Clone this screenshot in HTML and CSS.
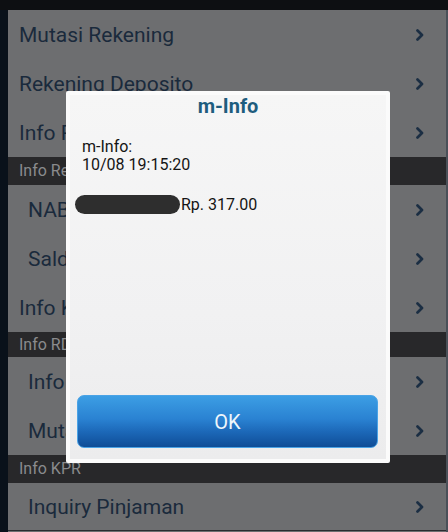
FILE: index.html
```html
<!DOCTYPE html>
<html lang="id">
<head>
<meta charset="utf-8">
<title>m-Info</title>
<link rel="stylesheet" href="styles.css">
</head>
<body>
<div class="top"></div>
<div class="main">
  <div class="rail"></div>
  <div class="list">
    <div class="row"><span>Mutasi Rekening</span><svg class="chev" viewBox="0 0 8 12"><polyline points="1.5,1.5 6,6 1.5,10.5"/></svg></div>
    <div class="row"><span>Rekening Deposito</span><svg class="chev" viewBox="0 0 8 12"><polyline points="1.5,1.5 6,6 1.5,10.5"/></svg></div>
    <div class="row"><span>Info Rekening</span><svg class="chev" viewBox="0 0 8 12"><polyline points="1.5,1.5 6,6 1.5,10.5"/></svg></div>
    <div class="section">Info Reksa Dana</div>
    <div class="row sub"><span>NAB Reksa Dana</span><svg class="chev" viewBox="0 0 8 12"><polyline points="1.5,1.5 6,6 1.5,10.5"/></svg></div>
    <div class="row sub"><span>Saldo Reksa Dana</span><svg class="chev" viewBox="0 0 8 12"><polyline points="1.5,1.5 6,6 1.5,10.5"/></svg></div>
    <div class="row"><span>Info Kurs</span><svg class="chev" viewBox="0 0 8 12"><polyline points="1.5,1.5 6,6 1.5,10.5"/></svg></div>
    <div class="section short">Info RDN</div>
    <div class="row sub"><span>Info Saldo</span><svg class="chev" viewBox="0 0 8 12"><polyline points="1.5,1.5 6,6 1.5,10.5"/></svg></div>
    <div class="row sub"><span>Mutasi RDN</span><svg class="chev" viewBox="0 0 8 12"><polyline points="1.5,1.5 6,6 1.5,10.5"/></svg></div>
    <div class="section">Info KPR</div>
    <div class="row sub last"><span>Inquiry Pinjaman</span><svg class="chev" viewBox="0 0 8 12"><polyline points="1.5,1.5 6,6 1.5,10.5"/></svg></div>
  </div>
</div>

<div class="dialog">
  <div class="dialog-inner">
    <div class="dialog-title">m-Info</div>
    <div class="dialog-body">
      <div class="line">m-Info:</div>
      <div class="line">10/08 19:15:20</div>
      <div class="line amount"><span class="redact"></span>Rp. 317.00</div>
    </div>
    <button class="ok">OK</button>
  </div>
</div>
</body>
</html>
```
FILE: styles.css
```css
* { box-sizing: border-box; }
html, body { margin: 0; padding: 0; }
body {
  width: 448px;
  height: 532px;
  overflow: hidden;
  background: #0d0f12;
  font-family: Roboto, "Noto Sans", "Liberation Sans", sans-serif;
  position: relative;
}
.top { height: 10px; background: #0d0f12; }
.main { display: flex; height: 522px; }
.rail { width: 8px; background: #09111a; }
.list {
  flex: 1;
  background: #6d6e70;
  border-right: 2px solid #4a5058;
  display: flex;
  flex-direction: column;
}
.row {
  height: 49px;
  flex: none;
  display: flex;
  align-items: center;
  justify-content: space-between;
  padding: 0 22px 0 11px;
  color: #1a2a3c;
  font-size: 21px;
}
.row.sub { padding-left: 20px; }
.row.last { height: 48px; border-bottom: 1px solid #2a2c30; }
.chev { width: 8px; height: 12px; }
.chev polyline {
  fill: none;
  stroke: #1b2e43;
  stroke-width: 2.7;
  stroke-linecap: round;
  stroke-linejoin: round;
}
.section {
  height: 28px;
  flex: none;
  background: #28282a;
  color: #8a8b8d;
  font-size: 16px;
  line-height: 28px;
  padding-left: 11px;
}
.section.short { height: 25px; line-height: 26px; }

.dialog {
  position: absolute;
  left: 66px;
  top: 91px;
  width: 324px;
  height: 372px;
  background: #fbfbfb;
  border-radius: 2px;
  padding: 4px;
}
.dialog-inner {
  height: 100%;
  display: flex;
  flex-direction: column;
  background: linear-gradient(#f6f6f6, #f1f1f2 60%, #ececed);
}
.dialog-title {
  text-align: center;
  font-size: 20px;
  font-weight: bold;
  color: #1e5d7e;
  line-height: 22px;
}
.dialog-body {
  padding: 21px 12px 0;
  color: #141414;
  font-size: 16px;
}
.line { line-height: 18px; }
.amount {
  display: flex;
  align-items: center;
  margin-top: 21px;
  margin-left: -7px;
}
.redact {
  display: inline-block;
  width: 105px;
  height: 19px;
  border-radius: 10px;
  background: #2e2e2e;
  margin-right: 1px;
}
.ok {
  margin: auto 8px 11px 7px;
  height: 53px;
  border: 1px solid #4aa3e6;
  border-radius: 7px;
  background: linear-gradient(#3c9ee4, #2a82d2 45%, #1c68b8 70%, #0f4d97);
  color: #eef6fb;
  font-family: Roboto, "Noto Sans", sans-serif;
  font-size: 20px;
  padding: 0;
}
```
